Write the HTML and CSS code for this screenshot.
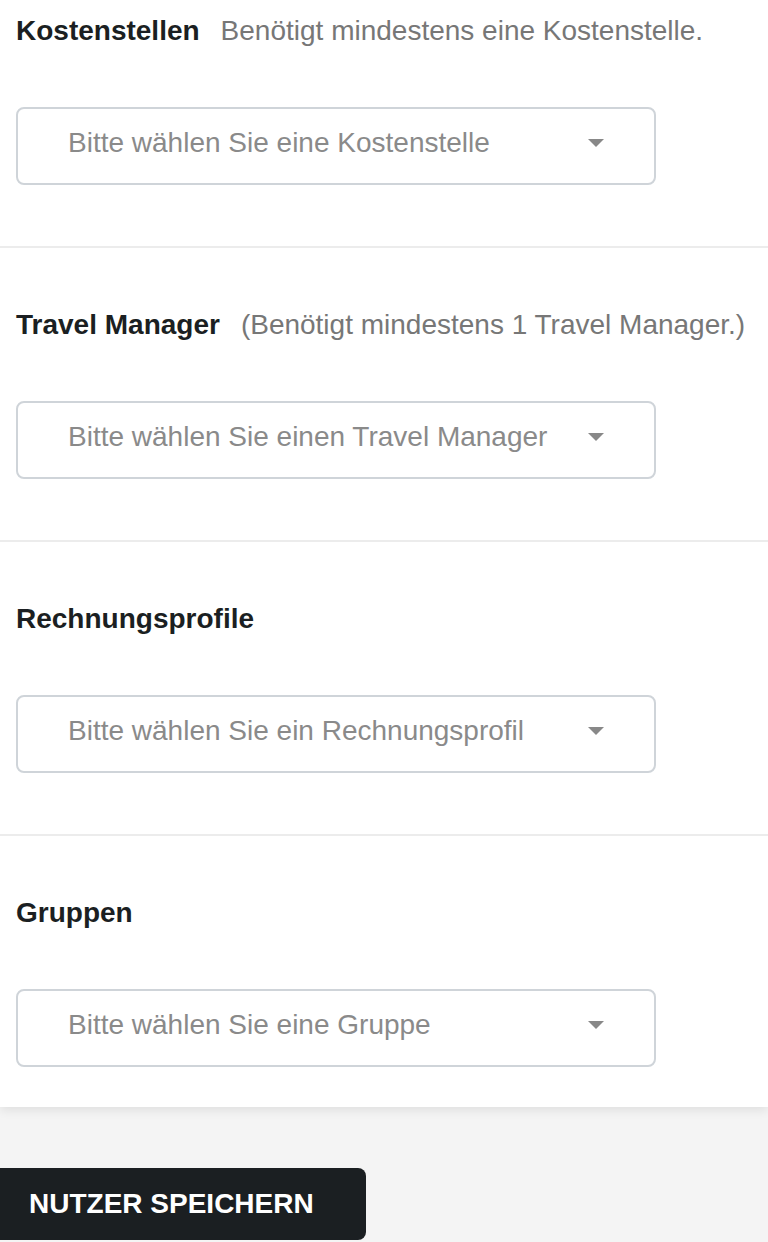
FILE: index.html
```html
<!DOCTYPE html>
<html>
<head lang="de">
    <meta charset="UTF-8">
    <title>Nutzer bearbeiten</title>
    <link rel="stylesheet" href="styles.css">
</head>
<body>
<div id="panel">
    <div class="section first">
        <div class="label">
            <strong>Kostenstellen</strong>
            <span class="hint">Benötigt mindestens eine Kostenstelle.</span>
        </div>
        <div class="select">
            <span class="placeholder">Bitte wählen Sie eine Kostenstelle</span>
            <span class="caret"></span>
        </div>
    </div>
    <div class="section">
        <div class="label">
            <strong>Travel Manager</strong>
            <span class="hint">(Benötigt mindestens 1 Travel Manager.)</span>
        </div>
        <div class="select">
            <span class="placeholder">Bitte wählen Sie einen Travel Manager</span>
            <span class="caret"></span>
        </div>
    </div>
    <div class="section">
        <div class="label">
            <strong>Rechnungsprofile</strong>
        </div>
        <div class="select">
            <span class="placeholder">Bitte wählen Sie ein Rechnungsprofil</span>
            <span class="caret"></span>
        </div>
    </div>
    <div class="section last">
        <div class="label">
            <strong>Gruppen</strong>
        </div>
        <div class="select">
            <span class="placeholder">Bitte wählen Sie eine Gruppe</span>
            <span class="caret"></span>
        </div>
    </div>
</div>
<div id="actions">
    <a href="#" class="btn">NUTZER SPEICHERN</a>
</div>
</body>
</html>
```

FILE: styles.css
```css
* {
    margin: 0;
    padding: 0;
    box-sizing: border-box;
}

a {
    text-decoration: none;
}

body {
    background-color: #f4f4f4;
    font-family: "Liberation Sans", Arial, Helvetica, sans-serif;
    font-size: 28px;
    color: #1b1f22;
}

#panel {
    background-color: #fff;
    box-shadow: 0 3px 10px rgba(0, 0, 0, 0.09);
}

.section {
    padding: 60px 16px 61px;
    border-bottom: 2px solid #ececec;
}

.section.first {
    padding-top: 14px;
}

.section.last {
    padding-bottom: 40px;
    border-bottom: 0;
}

.label {
    display: flex;
    align-items: baseline;
    height: 34px;
    line-height: 34px;
    white-space: nowrap;
}

.label strong {
    font-weight: bold;
    margin-right: 21px;
}

.hint {
    color: #777;
}

.select {
    display: flex;
    align-items: center;
    justify-content: space-between;
    width: 640px;
    height: 78px;
    margin-top: 59px;
    padding: 0 50px;
    border: 2px solid #cfd4d9;
    border-radius: 8px;
}

.placeholder {
    color: #8a8a8a;
    margin-top: -6px;
}

.caret {
    width: 0;
    height: 0;
    border-left: 8px solid transparent;
    border-right: 8px solid transparent;
    border-top: 8px solid #888;
    margin-top: -6px;
}

#actions {
    padding-top: 61px;
}

.btn {
    display: inline-block;
    width: 366px;
    height: 72px;
    line-height: 72px;
    padding-left: 29px;
    color: #fff;
    background-color: #1b1f22;
    font-weight: bold;
    border-radius: 0 8px 8px 0;
}
```
